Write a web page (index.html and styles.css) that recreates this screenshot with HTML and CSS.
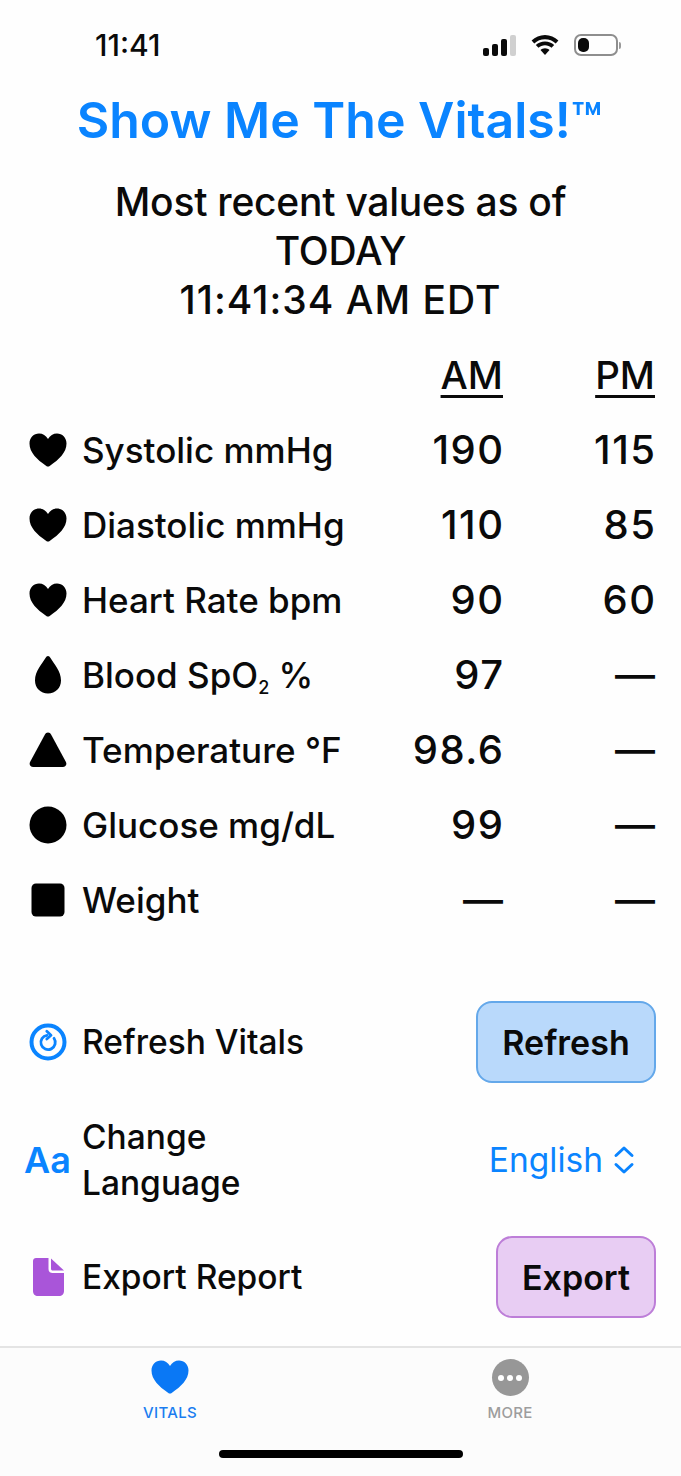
FILE: index.html
```html
<!DOCTYPE html>
<html lang="en">
<head>
<meta charset="utf-8">
<title>Show Me The Vitals!</title>
<link rel="stylesheet" href="styles.css">
</head>
<body>
<svg class="defs" width="0" height="0" aria-hidden="true">
  <defs>
    <symbol id="heart" viewBox="0 0 38 34"><path d="M19 33.6c-.6 0-1.300-.4-2-.9C8 26.500.5 19.500.5 10.500.5 4.500 4.800.5 10 .5c3.800 0 7 2 9 5.500 2-3.500 5.200-5.500 9-5.500 5.200 0 9.500 4 9.500 10 0 9-7.500 16-16.500 22.200-.7.5-1.400.9-2 .9z"/></symbol>
  </defs>
</svg>
<div class="screen">
  <header class="status">
    <span class="clock">11:41</span>
    <div class="status-icons">
      <div class="signal"><i class="b1"></i><i class="b2"></i><i class="b3"></i><i class="b4"></i></div>
      <svg class="wifi" viewBox="0 0 30 22"><path d="M15 5.200c4.100 0 7.900 1.600 10.700 4.200l2.700-2.800C24.800 3.200 20.100 1 15 1S5.200 3.200 1.600 6.600l2.700 2.800C7.100 6.800 10.900 5.200 15 5.200z"/><path d="M15 11.300c2.500 0 4.800 1 6.500 2.500l2.700-2.800c-2.400-2.200-5.600-3.600-9.200-3.600s-6.800 1.400-9.200 3.600l2.700 2.800c1.700-1.500 4-2.500 6.500-2.500z"/><path d="M15 14.200c-1.800 0-3.300.7-4.500 1.800l4.500 5 4.500-5c-1.200-1.100-2.700-1.800-4.500-1.800z"/></svg>
      <div class="battery"><div class="battery-body"><i></i></div><div class="battery-cap"></div></div>
    </div>
  </header>

  <h1 class="title">Show Me The Vitals!™</h1>
  <p class="subtitle">Most recent values as of<br>TODAY<br><span class="time">11:41:34 AM EDT</span></p>

  <section class="table">
    <div class="row head"><span class="label"></span><span class="val"><u>AM</u></span><span class="val"><u>PM</u></span></div>
    <div class="row"><svg class="icon"><use href="#heart"/></svg><span class="label">Systolic mmHg</span><span class="val">190</span><span class="val">115</span></div>
    <div class="row"><svg class="icon"><use href="#heart"/></svg><span class="label">Diastolic mmHg</span><span class="val">110</span><span class="val">85</span></div>
    <div class="row"><svg class="icon"><use href="#heart"/></svg><span class="label">Heart Rate bpm</span><span class="val">90</span><span class="val">60</span></div>
    <div class="row"><svg class="icon" viewBox="0 0 38 38"><path d="M19 0c1 0 1.800.8 2.500 2C25 8 32 15 32 24.500 32 32 26.500 37.500 19 37.500S6 32 6 24.500C6 15 13 8 16.500 2 17.200.8 18 0 19 0z"/></svg><span class="label">Blood SpO<sub class="sub">2</sub> %</span><span class="val">97</span><span class="val">—</span></div>
    <div class="row"><svg class="icon" viewBox="0 0 38 38"><path d="M19 1.500c1.400 0 2.400.8 3.200 2.200l14.600 27c1.400 2.700 0 5.300-3 5.300H4.200c-3 0-4.400-2.600-3-5.300l14.600-27C16.600 2.300 17.600 1.500 19 1.500z"/></svg><span class="label">Temperature °F</span><span class="val">98.6</span><span class="val">—</span></div>
    <div class="row"><svg class="icon" viewBox="0 0 38 38"><circle cx="19" cy="19" r="18.500"/></svg><span class="label">Glucose mg/dL</span><span class="val">99</span><span class="val">—</span></div>
    <div class="row"><svg class="icon" viewBox="0 0 38 38"><rect x="2.500" y="2.500" width="33" height="33" rx="4.500"/></svg><span class="label">Weight</span><span class="val">—</span><span class="val">—</span></div>
  </section>

  <section class="actions">
    <div class="action">
      <svg class="icon blue-line" viewBox="0 0 38 38"><circle cx="19" cy="19" r="16.500" stroke-width="4"/><path d="M18 12.300A7.200 7.200 0 1 0 25 15.300" stroke-width="2.800" stroke-linecap="round"/><path d="M17.800 8.300L22 12.200 17.800 16" stroke-width="2.800" stroke-linecap="round" stroke-linejoin="round"/></svg>
      <span class="label">Refresh Vitals</span>
      <button class="btn btn-blue" type="button">Refresh</button>
    </div>
    <div class="action">
      <span class="aa">Aa</span>
      <span class="label narrow">Change Language</span>
      <div class="picker"><span>English</span>
        <svg class="chev" viewBox="0 0 24 32"><path d="M4 11.500L12 4l8 7.500M4 20.500L12 28l8-7.500"/></svg>
      </div>
    </div>
    <div class="action">
      <svg class="icon file" viewBox="0 0 38 40"><path d="M7 1h12.500v11c0 2.500 1.500 4 4 4H35v18c0 3-2 5-5 5H9c-3 0-5-2-5-5V4c0-2 1.500-3 3-3z"/><path d="M22 1.500L35 13.500H24c-1.500 0-2-.5-2-2z"/></svg>
      <span class="label">Export Report</span>
      <button class="btn btn-purple" type="button">Export</button>
    </div>
  </section>

  <nav class="tabbar">
    <div class="tabs">
      <div class="tab active"><svg class="tab-icon"><use href="#heart"/></svg><span>VITALS</span></div>
      <div class="tab"><div class="more"><i></i><i></i><i></i></div><span>MORE</span></div>
    </div>
    <div class="home"></div>
  </nav>
</div>
</body>
</html>
```
FILE: styles.css
```css
* { box-sizing: border-box; }
html, body { margin: 0; padding: 0; }
body { background: #fefefe; color: #0a0a0a; font-family: Inter, "Liberation Sans", sans-serif; }
.defs { position: absolute; }
.screen { width: 681px; height: 1476px; display: flex; flex-direction: column; overflow: hidden; }

.status { height: 90px; flex: none; display: flex; align-items: center; justify-content: space-between; padding: 0 60px 0 95px; }
.clock { font-size: 30px; font-weight: 500; }
.status-icons { display: flex; align-items: center; gap: 14px; }
.signal { display: flex; align-items: flex-end; gap: 3px; height: 21px; }
.signal i { display: block; width: 6px; background: #0a0a0a; border-radius: 2px; }
.signal .b1 { height: 8px; }
.signal .b2 { height: 12px; }
.signal .b3 { height: 17px; }
.signal .b4 { height: 21px; background: #d0d0d0; }
.wifi { width: 30px; height: 22px; fill: #0a0a0a; }
.battery { display: flex; align-items: center; gap: 1px; }
.battery-body { width: 44px; height: 22px; border: 2px solid #8e8e8e; border-radius: 7px; padding: 2px; }
.battery-body i { display: block; width: 11px; height: 100%; background: #0a0a0a; border-radius: 5px; }
.battery-cap { width: 2px; height: 7px; background: #9a9a9a; border-radius: 0 2px 2px 0; }

.title { margin: 0; flex: none; height: 60px; line-height: 60px; text-align: center; font-size: 50px; font-weight: 600; color: #0a84ff; padding-right: 2px; }
.subtitle { margin: 27px 0 0; flex: none; text-align: center; font-size: 39px; line-height: 49px; font-weight: 500; letter-spacing: -0.25px; }
.time { letter-spacing: 1px; }

.table { margin-top: 13px; flex: none; padding: 0 26px 0 28.5px; }
.row { height: 75px; display: flex; align-items: center; font-size: 35px; font-weight: 500; }
.row .label { flex: 1; }
.icon { width: 38px; height: 38px; flex: none; margin-right: 15.5px; fill: #000; overflow: visible; }
.val { text-align: right; font-size: 40px; letter-spacing: 1.5px; }
.val:nth-last-child(2) { width: 120px; }
.val:last-child { width: 152px; margin-right: -1.5px; }
.head .val { letter-spacing: 0; }
.head .val:last-child { margin-right: 0; }
.val u { font-size: 38.5px; text-underline-offset: 6px; text-decoration-thickness: 3px; }
.sub { font-size: 18px; line-height: 0; vertical-align: -6px; }

.actions { margin-top: 64px; flex: none; padding: 0 25px 0 28.5px; display: flex; flex-direction: column; gap: 30.5px; }
.action { min-height: 82px; display: flex; align-items: center; font-size: 33.5px; font-weight: 500; }
.action .label { flex: 1; }
.action .label.narrow { line-height: 46px; max-width: 240px; }
.blue-line { fill: none; stroke: #0a84ff; }
.file { height: 40px; fill: #a955d9; }
.aa { width: 53.5px; margin-left: -4.5px; margin-right: 4.5px; flex: none; font-size: 36px; font-weight: 600; color: #0a84ff; }
.btn { height: 82px; border-radius: 16px; font: inherit; font-size: 34px; font-weight: 600; color: #0a0a0a; padding: 0; }
.btn-blue { width: 180px; background: #b9d9fb; border: 2px solid #64a8ea; }
.btn-purple { width: 160px; background: #e8cdf3; border: 2px solid #bd7ed8; }
.picker { margin-left: auto; margin-right: 20px; display: flex; align-items: center; gap: 9px; color: #0a84ff; font-weight: 400; font-size: 33.5px; }
.chev { width: 24px; height: 32px; fill: none; stroke: #0a84ff; stroke-width: 3; stroke-linecap: round; stroke-linejoin: round; }

.tabbar { margin-top: auto; height: 130px; flex: none; background: #fcfcfc; border-top: 2px solid #e4e4e4; display: flex; flex-direction: column; }
.tabs { display: flex; justify-content: space-between; padding: 11px 131px 0 130px; }
.tab { width: 80px; display: flex; flex-direction: column; align-items: center; gap: 8px; font-size: 15px; font-weight: 500; color: #9d9d9d; letter-spacing: 0.3px; }
.tab.active { color: #1a7cf0; }
.tab-icon { width: 38px; height: 36px; fill: #0a78f5; }
.more { width: 37px; height: 37px; border-radius: 50%; background: #979797; display: flex; align-items: center; justify-content: center; gap: 3px; margin-bottom: -1px; }
.more i { width: 6px; height: 6px; border-radius: 50%; background: #fff; }
.home { width: 244px; height: 8px; border-radius: 4px; background: #000; margin: 28px auto 0; }
```
